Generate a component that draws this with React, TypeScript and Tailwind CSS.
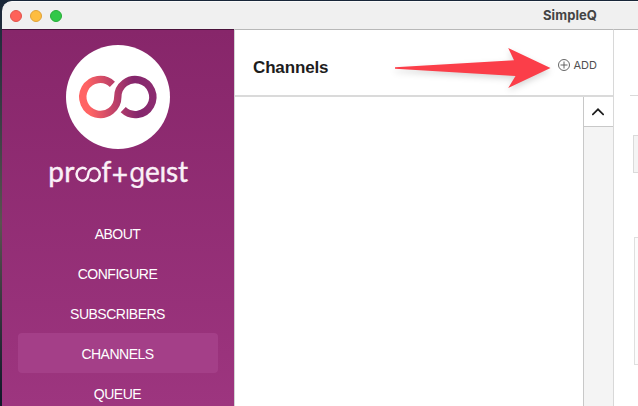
import React from "react";

const navItems = ["ABOUT", "CONFIGURE", "SUBSCRIBERS", "CHANNELS", "QUEUE"];

function TitleBar() {
  return (
    <header className="relative flex h-[28px] shrink-0 items-center gap-2 rounded-tl-[10px] border-t border-[#fafafa] bg-[#f0f0f0] pl-2">
      <span className="size-3 rounded-full border border-[#e2544c] bg-[#fe6259]" />
      <span className="size-3 rounded-full border border-[#dfa23a] bg-[#febd40]" />
      <span className="size-3 rounded-full border border-[#27ad37] bg-[#32c848]" />
      <h1 className="absolute left-[541px] top-[4px] text-[13px] font-bold leading-[18px] tracking-[0.08px] text-[#444] font-['Inter','Liberation_Sans',sans-serif]">
        SimpleQ
      </h1>
    </header>
  );
}

function Logo() {
  return (
    <svg className="h-[160px] w-[160px] shrink-0" viewBox="38 36 160 160" fill="none">
      <defs>
        <linearGradient id="mark" x1="79" y1="103" x2="157" y2="93" gradientUnits="userSpaceOnUse">
          <stop offset="0.12" stopColor="#ff6464" />
          <stop offset="0.45" stopColor="#bd4069" />
          <stop offset="0.73" stopColor="#84266c" />
          <stop offset="1" stopColor="#8d2c70" />
        </linearGradient>
      </defs>
      <circle cx="118" cy="97" r="52" fill="#fff" />
      <path
        d="M112.4 84.3A17.5 17.5 0 1 0 117.8 97A17.5 17.5 0 1 1 123.2 109.7"
        stroke="url(#mark)"
        strokeWidth="7.4"
      />
      <g fill="#faf0f7" stroke="#faf0f7" strokeWidth="0.4" fontSize="28" fontFamily="Lato, sans-serif">
        <text x="48.2" y="182.3">p</text>
        <text x="64.2" y="182.3">r</text>
        <text x="101.4" y="182.3">f</text>
        <text x="111.8" y="184.6">+</text>
        <text x="129.2" y="182.3" fontSize="26" fontFamily="Inter, sans-serif" strokeWidth="0.2">g</text>
        <text x="145" y="182.3" textLength="43" lengthAdjust="spacing">eıst</text>
      </g>
      <path
        d="M86.4 169.6A5.8 6.4 0 1 0 88.2 174.4A5.8 6.4 0 1 1 90 179.2"
        stroke="#faf0f7"
        strokeWidth="2.5"
      />
    </svg>
  );
}

function Sidebar() {
  return (
    <aside className="flex w-[232px] shrink-0 flex-col items-center overflow-hidden border-t border-[#4a123b] bg-linear-to-b from-[#87266a] to-[#9d357f] pt-[6px]">
      <Logo />
      <nav className="mt-[17px] flex w-[200px] shrink-0 flex-col">
        {navItems.map((item) => (
          <a
            key={item}
            className={
              "flex h-10 items-center justify-center rounded-[4px] pt-0.5 pr-px text-[14px] tracking-[-0.5px] text-white " +
              (item === "CHANNELS" ? "bg-[#a43f88]" : "")
            }
          >
            {item}
          </a>
        ))}
      </nav>
    </aside>
  );
}

function Arrow() {
  return (
    <svg className="absolute left-[145px] top-[10px] h-[60px] w-[180px] drop-shadow-[0_3px_3px_rgba(0,0,0,0.16)]" viewBox="380 40 180 60">
      <path d="M395 67.2L514 60.2L508.2 48L550.5 68L508.2 88L515.5 76L395 68.8Z" fill="#fb3e49" />
    </svg>
  );
}

function ChannelsPanel() {
  return (
    <main className="flex w-[379px] shrink-0 flex-col border-l border-t border-[#b8b8b8] border-l-[#d3d3d3]">
      <div className="relative flex h-[67px] shrink-0 items-center justify-between border-b-2 border-[#dadada] pl-[18px] pr-4">
        <h2 className="pt-2.5 text-[17px] font-bold leading-6 tracking-[-0.15px] text-[#1d1d1d]">Channels</h2>
        <Arrow />
        <button className="flex items-center gap-1 pt-[5px] text-[11px] leading-4 text-[#505050] font-['Inter','Liberation_Sans',sans-serif]">
          <svg className="size-3" viewBox="0 0 12 12" fill="none" stroke="#555" strokeWidth="0.9">
            <circle cx="6" cy="6" r="5.5" />
            <path d="M6 2.5V9.5M2.5 6H9.5" />
          </svg>
          ADD
        </button>
      </div>
      <div className="flex flex-1 justify-end">
        <div className="flex w-[30px] flex-col border-l border-[#c8c8c8] bg-[#f4f4f4]">
          <div className="flex h-[30px] items-center justify-center border-b border-[#c8c8c8] bg-white pr-[2px]">
            <svg className="h-2 w-3" viewBox="0 0 12 8" fill="none" stroke="#1c1c1c" strokeWidth="1.7">
              <path d="M0.3 7L6 1.3L11.7 7" />
            </svg>
          </div>
        </div>
      </div>
    </main>
  );
}

function DetailPanel() {
  return (
    <section className="flex flex-1 flex-col items-end border-l border-t border-[#b8b8b8] border-l-[#d8d8d8]">
      <div className="h-[66px] w-2 shrink-0 border-b border-[#dadada]" />
      <div className="mt-[39px] h-[38px] w-[5px] shrink-0 border border-r-0 border-[#dadada] bg-[#f4f4f4]" />
      <div className="mt-[64px] h-[128px] w-1 shrink-0 border border-r-0 border-[#dfdfdf] bg-[#fcfcfc]" />
    </section>
  );
}

export default function App() {
  return (
    <div className="h-[406px] w-[638px] overflow-hidden bg-linear-to-b from-[#182638] via-[#5b5350] via-55% to-[#101728] pl-0.5 pt-px font-['Liberation_Sans',Arial,sans-serif]">
      <div className="flex h-[405px] flex-col">
        <TitleBar />
        <div className="flex flex-1 overflow-hidden">
          <Sidebar />
          <div className="flex flex-1 bg-white">
            <ChannelsPanel />
            <DetailPanel />
          </div>
        </div>
      </div>
    </div>
  );
}
